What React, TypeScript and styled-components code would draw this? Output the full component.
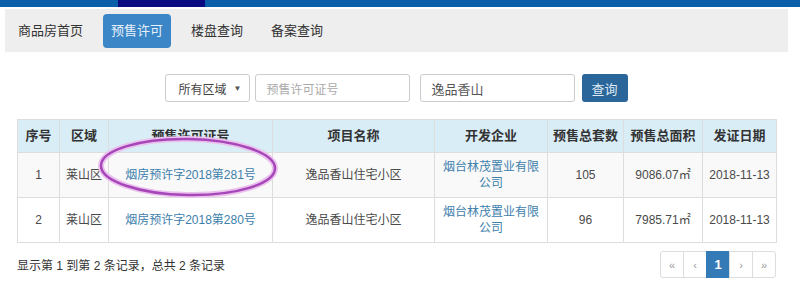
import styled, { createGlobalStyle } from 'styled-components';

const GlobalStyle = createGlobalStyle`
  body {
    margin: 0;
    background: #fff;
    font-family: 'Liberation Sans', 'Noto Sans CJK SC', sans-serif;
    color: #333;
  }
`;

const Page = styled.div`
  position: relative;
  width: 800px;
  height: 281px;
  overflow: hidden;
`;

// 맨 위 파란 띠
const TopBar = styled.div`
  height: 7px;
  background: #0b5fa9;
  display: flex;
`;

const TopBarMark = styled.div`
  margin-left: 118px;
  width: 87px;
  background: #0a0b80;
`;

const Nav = styled.nav`
  margin: 2px 12px 0 5px;
  height: 43px;
  background: #eeeeee;
  display: flex;
  align-items: center;
  gap: 12px;
  padding: 0 5px;
`;

const NavItem = styled.a<{ $active?: boolean }>`
  display: block;
  padding: 0 8px;
  height: 34px;
  line-height: 34px;
  font-size: 13px;
  border-radius: 4px;
  color: ${(p) => (p.$active ? '#e6f1fb' : '#333')};
  background: ${(p) => (p.$active ? '#3a86c6' : 'transparent')};
`;

const SearchRow = styled.form`
  display: flex;
  justify-content: center;
  align-items: center;
  margin-top: 22px;
  padding-right: 8px;
  height: 28px;
`;

const Select = styled.div`
  width: 85px;
  height: 28px;
  box-sizing: border-box;
  border: 1px solid #ccc;
  border-radius: 3px;
  display: flex;
  align-items: center;
  justify-content: space-between;
  padding: 0 7px 0 13px;
  font-size: 12px;
  color: #444;
`;

const Caret = styled.span`
  font-size: 8px;
  color: #555;
`;

const TextInput = styled.div<{ $placeholder?: boolean; $gap: number }>`
  width: 155px;
  height: 28px;
  margin-left: ${(p) => p.$gap}px;
  box-sizing: border-box;
  border: 1px solid #ccc;
  border-radius: 3px;
  display: flex;
  align-items: center;
  padding: 0 11px;
  font-size: ${(p) => (p.$placeholder ? '12px' : '13px')};
  color: ${(p) => (p.$placeholder ? '#aaa' : '#555')};
`;

const Button = styled.div`
  width: 46px;
  height: 28px;
  margin-left: 7px;
  border-radius: 3px;
  background: #2a6699;
  color: #dde9f4;
  font-size: 13px;
  display: flex;
  align-items: center;
  justify-content: center;
`;

const Content = styled.div`
  padding: 0 24px 0 17px;
`;

const Table = styled.table`
  margin-top: 17px;
  width: 759px;
  table-layout: fixed;
  border-collapse: collapse;
  font-size: 12px;
  tbody tr:nth-child(odd) {
    background: #f9f9f9;
  }
`;

const Col = styled.col<{ $w: number }>`
  width: ${(p) => p.$w}px;
`;

const Th = styled.th`
  border: 1px solid #ddd;
  background: #d9edf7;
  text-align: center;
  vertical-align: middle;
  padding: 6px 5px;
  line-height: 16px;
  height: 20px;
  font-weight: bold;
  font-size: 13px;
  white-space: nowrap;
  color: #333;
`;

const Td = styled.td<{ $nowrap?: boolean }>`
  border: 1px solid #ddd;
  text-align: center;
  vertical-align: middle;
  padding: 6px 5px;
  line-height: 16px;
  height: 32px;
  color: #4a4a4a;
  white-space: ${(p) => (p.$nowrap ? 'nowrap' : 'normal')};
`;

const Link = styled.a`
  color: #3d80ac;
`;

const Footer = styled.div`
  margin-top: 8px;
  display: flex;
  justify-content: space-between;
  align-items: center;
  font-size: 12px;
  color: #333;
`;

const Pager = styled.ul`
  display: flex;
  margin: 0;
  padding: 0;
  list-style: none;
`;

const PageItem = styled.li<{ $active?: boolean }>`
  min-width: 24px;
  height: 27px;
  box-sizing: border-box;
  border: 1px solid ${(p) => (p.$active ? '#337ab7' : '#ddd')};
  margin-left: -1px;
  display: flex;
  align-items: center;
  justify-content: center;
  padding: 0 1px;
  font-size: ${(p) => (p.$active ? '13px' : '11px')};
  font-weight: ${(p) => (p.$active ? 'bold' : 'normal')};
  color: ${(p) => (p.$active ? '#fff' : '#999')};
  background: ${(p) => (p.$active ? '#337ab7' : '#fff')};
  &:first-child {
    border-radius: 3px 0 0 3px;
  }
  &:last-child {
    border-radius: 0 3px 3px 0;
  }
`;

// 보라색 동그라미 표시 (스크린샷 위에 그린 것)
const Mark = styled.svg`
  position: absolute;
  left: 88px;
  top: 128px;
  pointer-events: none;
`;

interface Permit {
  no: number;
  area: string;
  permit: string;
  project: string;
  company: string;
  units: number;
  size: string;
  date: string;
}

const widths = [42, 49, 164, 162, 113, 76, 79, 74];
const headers = ['序号', '区域', '预售许可证号', '项目名称', '开发企业', '预售总套数', '预售总面积', '发证日期'];

const rows: Permit[] = [
  {
    no: 1,
    area: '莱山区',
    permit: '烟房预许字2018第281号',
    project: '逸品香山住宅小区',
    company: '烟台林茂置业有限公司',
    units: 105,
    size: '9086.07㎡',
    date: '2018-11-13',
  },
  {
    no: 2,
    area: '莱山区',
    permit: '烟房预许字2018第280号',
    project: '逸品香山住宅小区',
    company: '烟台林茂置业有限公司',
    units: 96,
    size: '7985.71㎡',
    date: '2018-11-13',
  },
];

function App() {
  return (
    <Page>
      <GlobalStyle />
      <TopBar>
        <TopBarMark />
      </TopBar>
      <Nav>
        <NavItem>商品房首页</NavItem>
        <NavItem $active>预售许可</NavItem>
        <NavItem>楼盘查询</NavItem>
        <NavItem>备案查询</NavItem>
      </Nav>
      <SearchRow>
        <Select>
          <span>所有区域</span>
          <Caret>▼</Caret>
        </Select>
        <TextInput $placeholder $gap={5}>
          预售许可证号
        </TextInput>
        <TextInput $gap={10}>逸品香山</TextInput>
        <Button>查询</Button>
      </SearchRow>
      <Content>
        <Table>
          <colgroup>
            {widths.map((w, i) => (
              <Col key={i} $w={w} />
            ))}
          </colgroup>
          <thead>
            <tr>
              {headers.map((h) => (
                <Th key={h}>{h}</Th>
              ))}
            </tr>
          </thead>
          <tbody>
            {rows.map((r) => (
              <tr key={r.no}>
                <Td>{r.no}</Td>
                <Td>{r.area}</Td>
                <Td>
                  <Link>{r.permit}</Link>
                </Td>
                <Td>{r.project}</Td>
                <Td>
                  <Link>{r.company}</Link>
                </Td>
                <Td>{r.units}</Td>
                <Td $nowrap>{r.size}</Td>
                <Td $nowrap>{r.date}</Td>
              </tr>
            ))}
          </tbody>
        </Table>
        <Footer>
          <span>显示第 1 到第 2 条记录，总共 2 条记录</span>
          <Pager>
            <PageItem>«</PageItem>
            <PageItem>‹</PageItem>
            <PageItem $active>1</PageItem>
            <PageItem>›</PageItem>
            <PageItem>»</PageItem>
          </Pager>
        </Footer>
      </Content>
      <Mark width="200" height="80" viewBox="0 0 200 80">
        <ellipse
          cx="100"
          cy="39"
          rx="87"
          ry="28"
          fill="none"
          stroke="#ebc2ee"
          strokeWidth="6"
          transform="rotate(1 100 39)"
        />
        <ellipse
          cx="100"
          cy="39"
          rx="87"
          ry="28"
          fill="none"
          stroke="#a646b8"
          strokeWidth="2.5"
          transform="rotate(1 100 39)"
        />
      </Mark>
    </Page>
  );
}

export default App;
